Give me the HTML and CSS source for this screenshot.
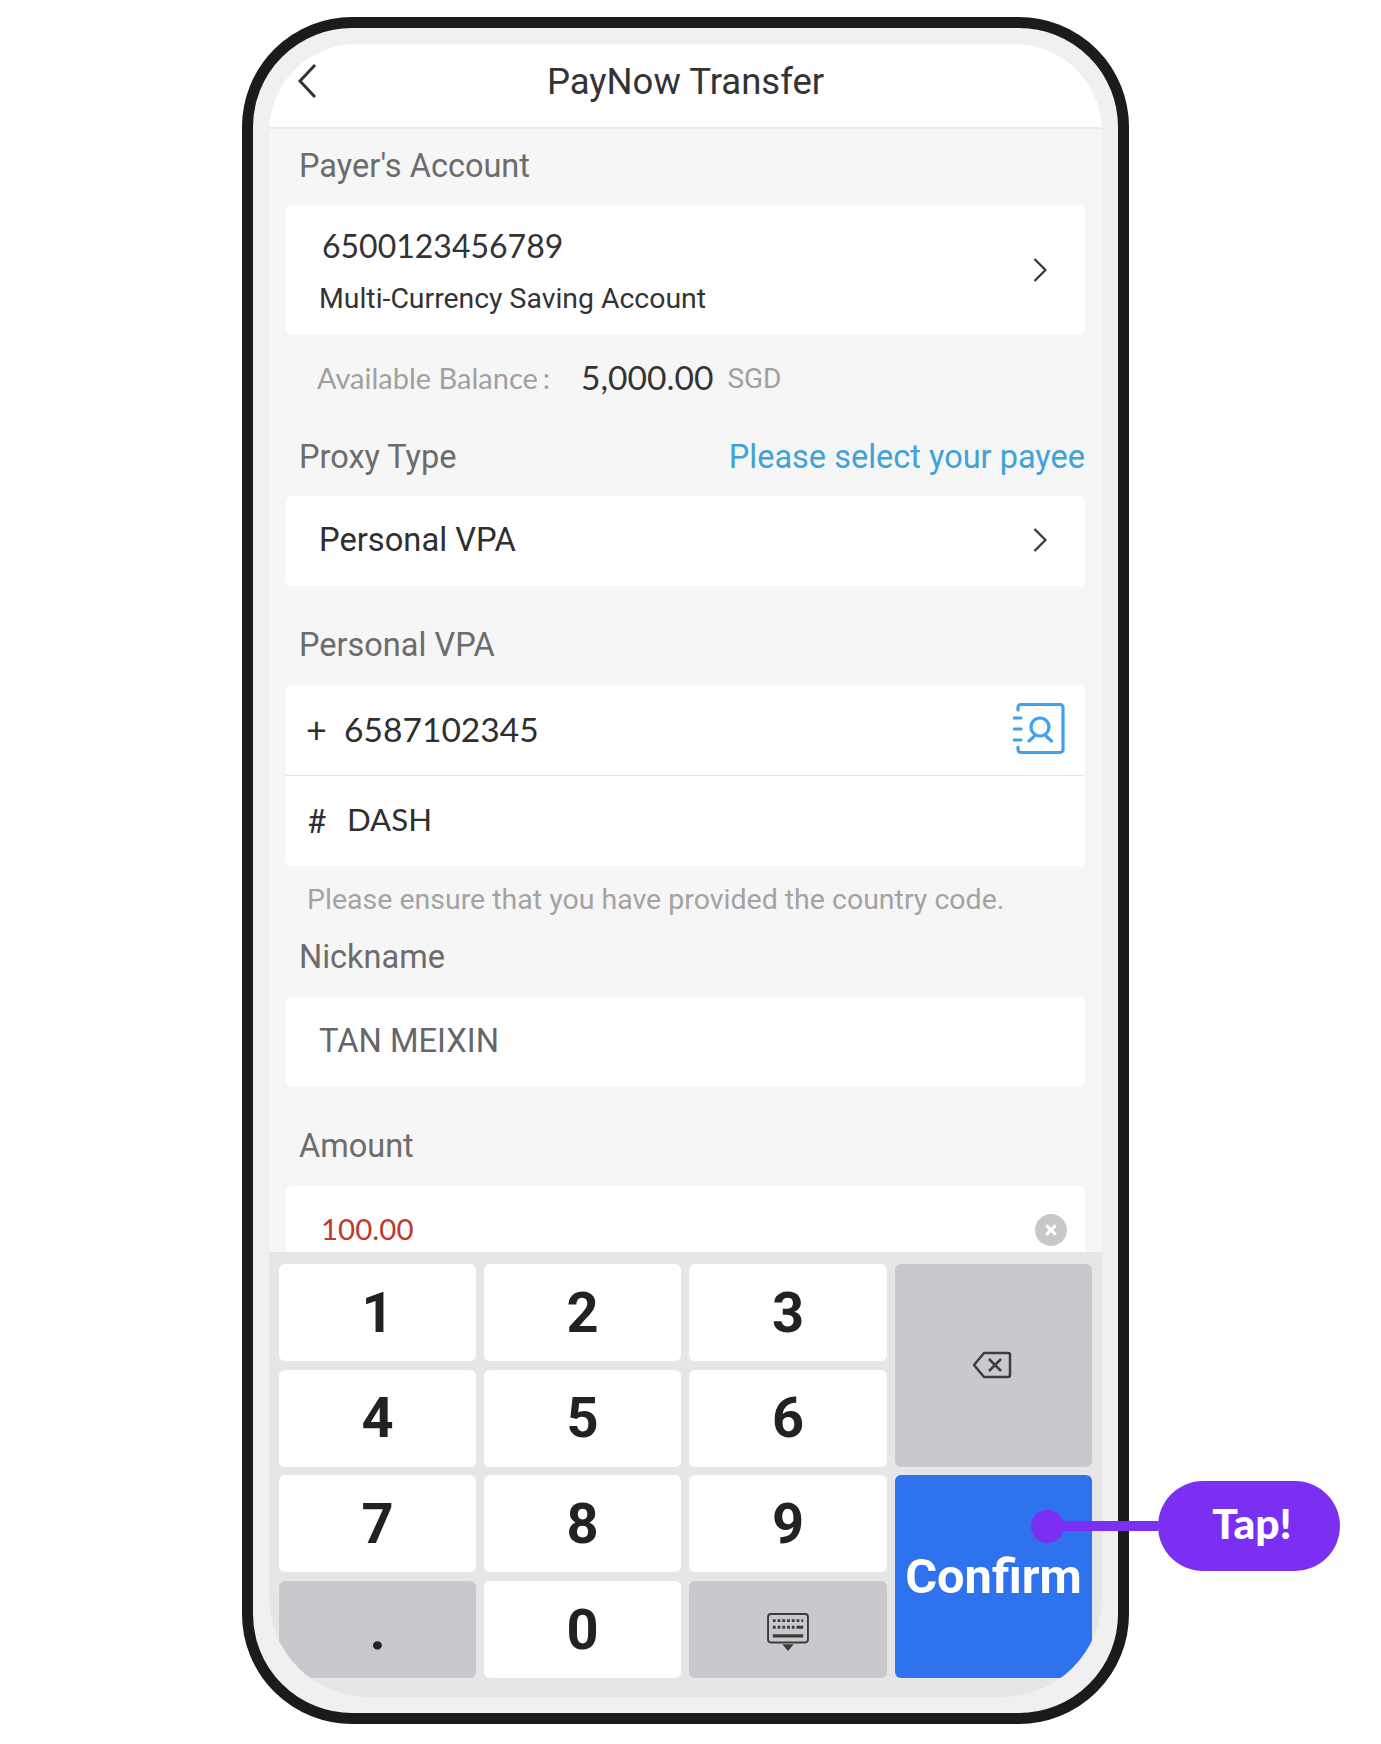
FILE: index.html
```html
<!DOCTYPE html>
<html>
<head>
    <title>PayNow Transfer</title>
    <link rel="stylesheet" href="styles.css">
</head>
<body>
<div class="phone">
    <div class="screen">
        <div class="header">
            <svg class="back" viewBox="0 0 20 36"><path d="M18 2 3 18l15 16"/></svg>
            <span class="title">PayNow Transfer</span>
        </div>
        <div class="form">
            <div class="label label-first">Payer's Account</div>
            <div class="card card-account">
                <div class="account">
                    <div class="account-no">6500123456789</div>
                    <div class="account-name">Multi-Currency Saving Account</div>
                </div>
                <svg class="chevron" viewBox="0 0 14 26"><path d="M1.500 2 12.500 13 1.500 24"/></svg>
            </div>
            <div class="balance">
                <span class="balance-label">Available Balance<span class="colon">:</span></span>
                <span class="balance-value">5,000.00</span>
                <span class="balance-unit">SGD</span>
            </div>
            <div class="label label-proxy">
                <span>Proxy Type</span>
                <span class="link">Please select your payee</span>
            </div>
            <div class="card row">
                <span class="value">Personal VPA</span>
                <svg class="chevron" viewBox="0 0 14 26"><path d="M1.500 2 12.500 13 1.500 24"/></svg>
            </div>
            <div class="label label-gap">Personal VPA</div>
            <div class="card">
                <div class="row row-line">
                    <span class="prefix">+</span>
                    <span class="lato phone-no">6587102345</span>
                    <svg class="contacts" viewBox="0 0 52 52">
                        <path class="book" d="M5 7V4.500a3 3 0 0 1 3-3h39a3 3 0 0 1 3 3v42a3 3 0 0 1-3 3H8a3 3 0 0 1-3-3V44"/>
                        <path class="book" d="M1 15h7M1 26h7M1 37h7"/>
                        <circle class="book" cx="27" cy="24" r="9"/>
                        <path class="book" d="M16 38l5-4.500M38.500 38l-5-4.500"/>
                    </svg>
                </div>
                <div class="row">
                    <span class="prefix prefix-hash">#</span>
                    <span class="lato dash">DASH</span>
                </div>
            </div>
            <div class="hint">Please ensure that you have provided the country code.</div>
            <div class="label label-nick">Nickname</div>
            <div class="card row">
                <span class="value value-muted">TAN MEIXIN</span>
            </div>
            <div class="label label-gap">Amount</div>
            <div class="card row">
                <span class="lato amount">100.00</span>
                <span class="clear">
                    <svg viewBox="0 0 12 12"><path d="M2 2l8 8M10 2l-8 8"/></svg>
                </span>
            </div>
        </div>
        <div class="keyboard">
            <div class="key">1</div>
            <div class="key">2</div>
            <div class="key">3</div>
            <div class="key key-gray key-tall">
                <svg class="backspace" viewBox="0 0 40 28">
                    <path d="M12 2h24a2 2 0 0 1 2 2v20a2 2 0 0 1-2 2H12L2 14z"/>
                    <path d="M17 8l12 12M29 8 17 20"/>
                </svg>
            </div>
            <div class="key">4</div>
            <div class="key">5</div>
            <div class="key">6</div>
            <div class="key">7</div>
            <div class="key">8</div>
            <div class="key">9</div>
            <div class="key key-confirm">Confirm</div>
            <div class="key key-gray">.</div>
            <div class="key">0</div>
            <div class="key key-gray">
                <svg class="kbd" viewBox="0 0 44 40">
                    <rect class="kbd-case" x="1" y="1" width="42" height="30" rx="3"/>
                    <path class="kbd-keys" d="M6 8h3M11 8h3M16 8h3M21 8h3M26 8h3M31 8h3M36 8h2M6 15h3M11 15h3M16 15h3M21 15h3M26 15h3M31 15h7"/>
                    <path class="kbd-bar" d="M6 24h32"/>
                    <path class="kbd-arrow" d="M16 33h12l-6 7z"/>
                </svg>
            </div>
        </div>
    </div>
    <div class="callout">
        <span class="callout-dot"></span>
        <span class="callout-line"></span>
        <span class="callout-pill">Tap!</span>
    </div>
</div>
</body>
</html>
```

FILE: styles.css
```css
body {
    margin: 0;
    background: #fff;
    font-family: Roboto, "Liberation Sans", sans-serif;
}
.phone {
    position: relative;
    box-sizing: border-box;
    width: 887px;
    height: 1707px;
    margin: 17px 0 0 242px;
    padding: 16px;
    border: 11px solid #1b1b1b;
    border-radius: 110px;
    background: #f0f0f0;
}
.screen {
    display: flex;
    flex-direction: column;
    height: 100%;
    overflow: hidden;
    border-radius: 88px 88px 100px 100px;
    background: #f6f6f6;
}

.header {
    position: relative;
    flex: none;
    display: flex;
    align-items: center;
    justify-content: center;
    box-sizing: border-box;
    height: 85px;
    border-bottom: 2px solid #e9e9e9;
    background: #fff;
}
.title {
    color: #333;
    font-size: 36.500px;
    margin-top: -8px;
}
.back {
    position: absolute;
    left: 28px;
    top: 19px;
    width: 20px;
    height: 36px;
}
.back path, .chevron path {
    fill: none;
    stroke: #333;
    stroke-width: 3;
}

.form {
    flex: 1;
    min-height: 0;
    overflow: hidden;
    padding: 0 17px;
}
.label {
    display: flex;
    align-items: center;
    justify-content: space-between;
    box-sizing: border-box;
    padding-left: 13px;
    color: #6c6c6c;
    font-size: 32.500px;
}
.label-first { height: 76px; padding-bottom: 3px; }
.label-proxy { height: 75px; padding-bottom: 3px; }
.label-gap { height: 99px; padding-top: 19px; }
.label-nick { height: 63px; padding-bottom: 17px; }
.link { color: #3fa2d9; }

.card {
    border-radius: 5px;
    background: #fff;
}
.row {
    display: flex;
    align-items: center;
    box-sizing: border-box;
    height: 90px;
    padding: 0 33px 2px;
    color: #2f2f2f;
    font-size: 32.700px;
}
.row-line {
    height: 91px;
    border-bottom: 1px solid #e6e6e6;
}
.card-account {
    display: flex;
    align-items: center;
    justify-content: space-between;
    box-sizing: border-box;
    height: 130px;
    padding: 0 33px;
}
.account { padding-top: 3px; }
.chevron {
    flex: none;
    width: 14px;
    height: 26px;
    margin-left: auto;
    margin-right: 5px;
}
.chevron path { stroke-width: 2.200; }
.account-no {
    margin-left: 3px;
    color: #333;
    font-family: Lato, sans-serif;
    font-size: 32px;
    line-height: 40px;
}
.account-name {
    margin-top: 15px;
    color: #333;
    font-size: 28.400px;
    line-height: 36px;
}

.balance {
    display: flex;
    align-items: center;
    height: 86px;
    padding-left: 31px;
    color: #a0a0a0;
    font-family: Lato, sans-serif;
    font-size: 29px;
}
.balance-label {
    width: 264px;
    padding-bottom: 2px;
}
.colon { margin-left: 5px; }
.balance-value {
    margin-right: 14px;
    padding-bottom: 2px;
    color: #333;
    font-size: 33.600px;
}
.balance-unit {
    font-family: Roboto, sans-serif;
    font-size: 28px;
}

.value-muted { color: #666; }
.lato { font-family: Lato, sans-serif; }
.prefix {
    width: 38px;
    margin-left: -13px;
    font-family: Lato, sans-serif;
    font-size: 36px;
}
.prefix-hash {
    width: 39px;
    margin-left: -11px;
    font-size: 32px;
}
.phone-no { font-size: 33.600px; }
.dash {
    margin-bottom: 2px;
    font-size: 31.200px;
}
.contacts {
    flex: none;
    width: 52px;
    height: 52px;
    margin-left: auto;
    margin-right: -13px;
}
.book {
    fill: none;
    stroke: #3fa2ee;
    stroke-width: 3.200;
    stroke-linecap: round;
}
.hint {
    display: flex;
    align-items: center;
    box-sizing: border-box;
    height: 68px;
    padding: 0 0 2px 21px;
    color: #a3a3a3;
    font-size: 28.500px;
}
.amount {
    margin-left: 2px;
    padding-bottom: 4px;
    color: #c0392b;
    font-size: 29.500px;
}
.clear {
    display: flex;
    align-items: center;
    justify-content: center;
    width: 32px;
    height: 32px;
    margin-left: auto;
    margin-right: -15px;
    border-radius: 50%;
    background: #c8c8c8;
}
.clear svg {
    width: 14px;
    height: 14px;
}
.clear path {
    fill: none;
    stroke: #fff;
    stroke-width: 2.600;
}

.keyboard {
    flex: none;
    display: grid;
    grid-template-columns: 197px 197px 198px 197px;
    grid-auto-rows: 97px;
    gap: 8.700px 8px;
    box-sizing: border-box;
    height: 445px;
    padding: 12px 8px 19px 10px;
    background: #e6e6e6;
}
.key {
    display: flex;
    align-items: center;
    justify-content: center;
    border-radius: 6px;
    background: #fff;
    color: #222;
    font-size: 56px;
    font-weight: 700;
}
.key-gray { background: #c9c9cd; }
.key-tall {
    grid-column: 4;
    grid-row: 1 / span 2;
}
.key-confirm {
    grid-column: 4;
    grid-row: 3 / span 2;
    background: #2f72ee;
    color: #fff;
    font-size: 48.800px;
}
.backspace {
    width: 40px;
    height: 28px;
    margin-right: 4px;
}
.backspace path {
    fill: none;
    stroke: #3c3c3c;
    stroke-width: 2.500;
    stroke-linejoin: round;
}
.kbd {
    width: 42px;
    height: 38px;
    margin-top: 4px;
}
.kbd-case {
    fill: none;
    stroke: #3c3c3c;
    stroke-width: 2;
}
.kbd-keys {
    fill: none;
    stroke: #3c3c3c;
    stroke-width: 3;
}
.kbd-bar {
    fill: none;
    stroke: #3c3c3c;
    stroke-width: 3.500;
}
.kbd-arrow { fill: #3c3c3c; }

.callout {
    position: absolute;
    left: 778px;
    top: 1453px;
    display: flex;
    align-items: center;
}
.callout-dot {
    width: 33px;
    height: 33px;
    border-radius: 50%;
    background: #7a2ff2;
}
.callout-line {
    width: 95px;
    height: 10px;
    margin-left: -1px;
    background: #7a2ff2;
}
.callout-pill {
    display: flex;
    align-items: center;
    justify-content: center;
    box-sizing: border-box;
    width: 182px;
    height: 90px;
    padding: 0 0 7px 6px;
    border-radius: 45px;
    background: #7a2ff2;
    color: #fff;
    font-family: Lato, sans-serif;
    font-size: 42.600px;
    font-weight: 900;
}
```
